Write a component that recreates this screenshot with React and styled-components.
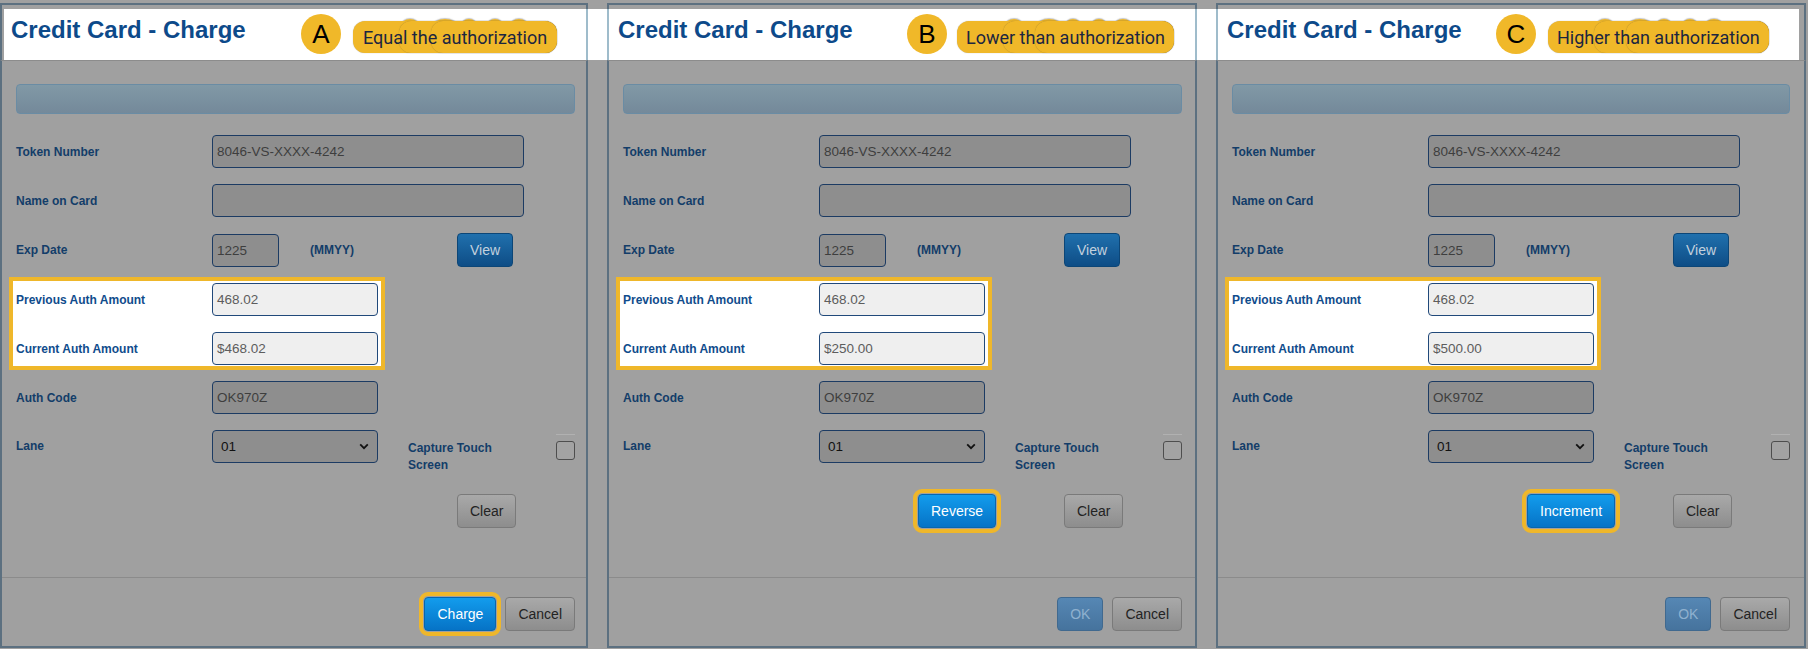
import React from 'react'
import styled, { createGlobalStyle, css } from 'styled-components'

const YELLOW = '#efb72a'
const FRAME = '#5c7080'

const GlobalStyle = createGlobalStyle`
  html, body { margin: 0; padding: 0; }
  body {
    background: #a0a0a0;
    font-family: "Liberation Sans", Arial, sans-serif;
  }
`

const Page = styled.div`
  width: 1808px;
  height: 649px;
  overflow: hidden;
  background: linear-gradient(#fff, #fff) 4px 9px / 1795px 51px no-repeat, #a0a0a0;
`

const Panels = styled.div`
  display: flex;
  gap: 19px;
  padding-top: 3px;
`

const Panel = styled.section`
  width: ${p => p.$w}px;
  height: 645px;
  flex-shrink: 0;
  display: flex;
  flex-direction: column;
`

const Cap = styled.div`
  height: 4px;
  border: 2px solid ${FRAME};
  border-bottom: 0;
`

const Header = styled.header`
  position: relative;
  height: 51px;
  box-sizing: border-box;
  padding: 7px 0 0 9px;
  border-left: 2px solid ${p => (p.$edge === 'left' ? FRAME : '#9fbccb')};
  border-right: 2px solid ${p => (p.$edge === 'right' ? FRAME : '#9fbccb')};
`

const Title = styled.h2`
  margin: 0;
  font-size: 24px;
  line-height: 28px;
  font-weight: 700;
  color: #0d4a8a;
`

const Callout = styled.div`
  position: absolute;
  top: 5px;
  left: ${p => p.$left}px;
  display: flex;
  align-items: flex-start;
  gap: ${p => p.$gap}px;
`

const Badge = styled.div`
  width: 40px;
  height: 40px;
  border-radius: 50%;
  background: #f0b829;
  display: grid;
  place-items: center;
  font-size: 26px;
  color: #000;
`

const Pill = styled.div`
  position: relative;
  isolation: isolate;
  margin-top: 7px;
  height: 32px;
  padding: 0 ${p => p.$pad}px;
  display: flex;
  align-items: center;
  font-family: Roboto, "Liberation Sans", sans-serif;
  font-size: 18px;
  color: #1c2640;
  white-space: nowrap;
`

const Ghost = styled.span`
  position: absolute;
  z-index: -1;
  top: ${p => p.$top}px;
  bottom: 0;
  left: ${p => p.$from}px;
  right: 0;
  border-radius: 12px;
  background: #f0b829;
  box-shadow: 0 0 1px rgba(60, 60, 60, 0.45);
`

const Bump = styled.span`
  position: absolute;
  z-index: -1;
  top: -2px;
  left: ${p => p.$at}px;
  width: ${p => p.$size}px;
  height: 14px;
  border-radius: 50%;
  background: #f0b829;
  box-shadow: 0 -1px 1px rgba(60, 60, 60, 0.3);
`

const Body = styled.div`
  flex: 1;
  display: flex;
  flex-direction: column;
  padding: 23px ${p => p.$padR}px 0 14px;
  background: #a0a0a0;
  border: 2px solid ${FRAME};
  border-top: 1px solid #8c8c8c;
`

const InfoBar = styled.div`
  height: 30px;
  box-sizing: border-box;
  border: 1px solid #6a8ca4;
  border-radius: 4px;
  background: linear-gradient(#8199a6, #74899a);
`

const Form = styled.div`
  margin-top: 21px;
  display: flex;
  flex-direction: column;
  gap: 16px;
`

const Row = styled.div`
  display: grid;
  grid-template-columns: 196px 166px 1fr;
  align-items: ${p => (p.$top ? 'start' : 'center')};
  min-height: 33px;
  margin-top: ${p => p.$mt || 0}px;
`

const Label = styled.div`
  font-size: 12px;
  font-weight: 700;
  line-height: ${p => (p.$tall ? '33px' : 'normal')};
  color: ${p => (p.$lit ? '#104c8c' : '#133d69')};
`

const Field = styled.div`
  grid-column: ${p => (p.$wide ? '2 / 4' : 'auto')};
  width: ${p => p.$w}px;
  height: 33px;
  box-sizing: border-box;
  display: flex;
  align-items: center;
  justify-content: space-between;
  padding: 0 ${p => (p.$select ? 8 : 4)}px;
  border: 1px solid #1c3b63;
  border-radius: 4px;
  background: #8e8e8e;
  color: ${p => (p.$select ? '#111' : '#3e3e3e')};
  font-size: 13.5px;
  ${p =>
    p.$lit &&
    css`
      background: #efefef;
      border-color: #21497a;
      color: #5d5d5d;
    `}
`

const Cell = styled.div`
  display: flex;
  align-items: ${p => (p.$top ? 'flex-start' : 'center')};
`

const Hint = styled.span`
  margin-left: 31px;
  font-size: 12px;
  font-weight: 700;
  color: #133d69;
`

const Spotlight = styled.div`
  align-self: flex-start;
  display: flex;
  flex-direction: column;
  gap: 16px;
  margin: -2px 0 -1px -3px;
  padding: 2px 3px 1px 3px;
  background: #fff;
  outline: 4px solid ${YELLOW};
`

const CaptureLabel = styled.div`
  width: 100px;
  margin: 10px 0 0 30px;
  font-size: 12px;
  line-height: 17px;
  font-weight: 700;
  color: #133d69;
`

const Checkbox = styled.span`
  position: relative;
  margin: 11px 0 0 auto;
  width: 19px;
  height: 19px;
  box-sizing: border-box;
  border: 1px solid #4e4e4e;
  border-radius: 3px;
  background: #a3a3a3;

  &::before {
    content: '';
    position: absolute;
    left: -1px;
    right: -1px;
    top: -8px;
    height: 1px;
    background: rgba(255, 255, 255, 0.18);
  }
`

const tones = {
  gray: css`
    background: linear-gradient(#a9a9a9, #8d8d8d);
    border-color: #7a7a7a;
    color: #232323;
  `,
  navy: css`
    background: linear-gradient(#2070ad, #0e4d86);
    border-color: #0c4677;
    color: #c3d1de;
  `,
  blue: css`
    background: linear-gradient(#129ced, #0673c6);
    border-color: #0867ad;
    color: #fff;
  `,
  muted: css`
    background: linear-gradient(#5687b4, #46739d);
    border-color: #40698f;
    color: #8fb1cf;
  `,
}

const Button = styled.button`
  height: 34px;
  padding: 0 12px;
  margin-left: ${p => p.$ml || 0}px;
  border: 1px solid;
  border-radius: 4px;
  font-family: "Liberation Sans", Arial, sans-serif;
  font-size: 14px;
  white-space: nowrap;
  ${p => tones[p.$tone]}
  ${p =>
    p.$mark &&
    css`
      outline: 4px solid ${YELLOW};
      outline-offset: 1px;
    `}
`

const Footer = styled.footer`
  margin: auto ${p => -p.$padR}px 0 -14px;
  padding: 19px ${p => p.$padR}px 15px 14px;
  border-top: 1px solid #8b8b8b;
  display: flex;
  justify-content: flex-end;
  gap: 9px;
`

const Chevron = () => (
  <svg width="10" height="7" viewBox="0 0 10 7">
    <path d="M1.2 1.4 L5 5.2 L8.8 1.4" fill="none" stroke="#111" strokeWidth="1.8" />
  </svg>
)

const bumps = [
  [48, 18],
  [80, 24],
  [108, 16],
  [134, 16],
  [157, 18],
]

const panels = [
  {
    key: 'A', w: 588, edge: 'left', padR: 11, badgeLeft: 299, gap: 12, pad: 10,
    note: 'Equal the authorization', current: '$468.02',
    action: null, primary: 'Charge', primaryLit: true,
  },
  {
    key: 'B', w: 590, edge: null, padR: 13, badgeLeft: 298, gap: 10, pad: 9,
    note: 'Lower than authorization', current: '$250.00',
    action: 'Reverse', primary: 'OK', primaryLit: false,
  },
  {
    key: 'C', w: 590, edge: 'right', padR: 14, badgeLeft: 278, gap: 12, pad: 9,
    note: 'Higher than authorization', current: '$500.00',
    action: 'Increment', primary: 'OK', primaryLit: false,
  },
]

const ChargePanel = ({ data }) => (
  <Panel $w={data.w}>
    <Cap />
    <Header $edge={data.edge}>
      <Title>Credit Card - Charge</Title>
      <Callout $left={data.badgeLeft} $gap={data.gap}>
        <Badge>{data.key}</Badge>
        <Pill $pad={data.pad}>
          {bumps.map(([at, size]) => (
            <Bump key={at} $at={at} $size={size} />
          ))}
          <Ghost $from={0} $top={0} />
          <Ghost $from={46} $top={0} />
          <Ghost $from={78} $top={0} />
          <span>{data.note}</span>
        </Pill>
      </Callout>
    </Header>
    <Body $padR={data.padR}>
      <InfoBar />
      <Form>
        <Row>
          <Label>Token Number</Label>
          <Field $wide $w={312}>8046-VS-XXXX-4242</Field>
        </Row>
        <Row>
          <Label>Name on Card</Label>
          <Field $wide $w={312} />
        </Row>
        <Row>
          <Label>Exp Date</Label>
          <Cell>
            <Field $w={67}>1225</Field>
            <Hint>(MMYY)</Hint>
          </Cell>
          <Cell>
            <Button $tone="navy" $ml={79}>View</Button>
          </Cell>
        </Row>
        <Spotlight>
          <Row>
            <Label $lit>Previous Auth Amount</Label>
            <Field $lit $w={166}>468.02</Field>
          </Row>
          <Row>
            <Label $lit>Current Auth Amount</Label>
            <Field $lit $w={166}>{data.current}</Field>
          </Row>
        </Spotlight>
        <Row>
          <Label>Auth Code</Label>
          <Field $w={166}>OK970Z</Field>
        </Row>
        <Row $top>
          <Label $tall>Lane</Label>
          <Field $select $w={166}>
            01
            <Chevron />
          </Field>
          <Cell $top>
            <CaptureLabel>Capture Touch Screen</CaptureLabel>
            <Checkbox />
          </Cell>
        </Row>
        <Row $mt={4}>
          <span />
          <Cell>
            {data.action && (
              <Button $tone="blue" $mark $ml={99}>{data.action}</Button>
            )}
          </Cell>
          <Cell>
            <Button $tone="gray" $ml={79}>Clear</Button>
          </Cell>
        </Row>
      </Form>
      <Footer $padR={data.padR}>
        <Button $tone={data.primaryLit ? 'blue' : 'muted'} $mark={data.primaryLit}>
          {data.primary}
        </Button>
        <Button $tone="gray">Cancel</Button>
      </Footer>
    </Body>
  </Panel>
)

export default function App() {
  return (
    <>
      <GlobalStyle />
      <Page>
        <Panels>
          {panels.map(p => (
            <ChargePanel key={p.key} data={p} />
          ))}
        </Panels>
      </Page>
    </>
  )
}
